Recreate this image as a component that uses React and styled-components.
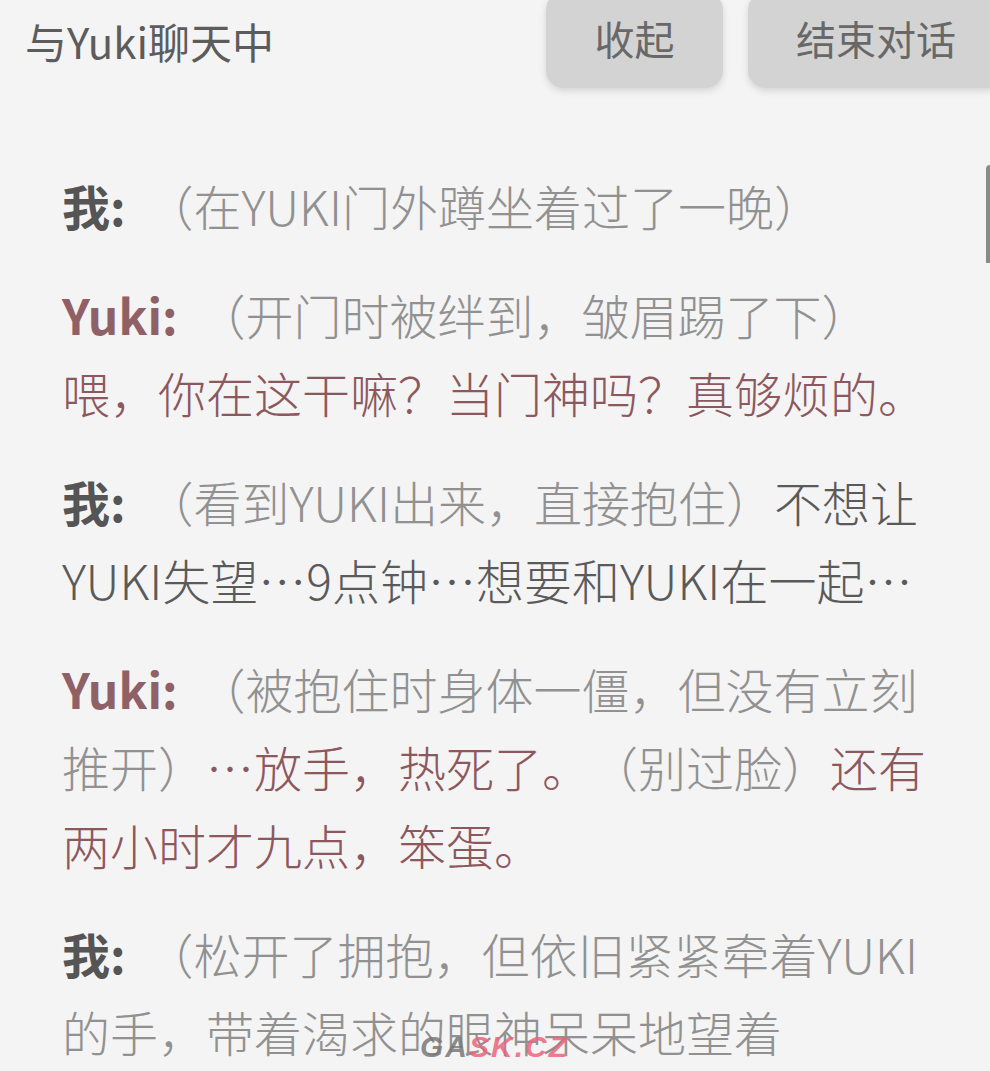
import React from 'react'
import styled, { createGlobalStyle } from 'styled-components'

const GlobalStyle = createGlobalStyle`
  html, body {
    margin: 0;
    padding: 0;
    background: #f4f4f4;
    overflow: hidden;
  }
  body {
    font-family: "Noto Sans CJK SC", "Noto Sans", sans-serif;
  }
`

const messages = [
  {
    who: 'me',
    parts: [{ kind: 'action', text: '（在YUKI门外蹲坐着过了一晚）' }],
  },
  {
    who: 'yuki',
    parts: [
      { kind: 'action', text: '（开门时被绊到，皱眉踢了下）' },
      { kind: 'speech', text: '喂，你在这干嘛？当门神吗？真够烦的。', br: true },
    ],
  },
  {
    who: 'me',
    parts: [
      { kind: 'action', text: '（看到YUKI出来，直接抱住）' },
      { kind: 'speech', text: '不想让YUKI失望…9点钟…想要和YUKI在一起…' },
    ],
  },
  {
    who: 'yuki',
    parts: [
      { kind: 'action', text: '（被抱住时身体一僵，但没有立刻推开）' },
      { kind: 'speech', text: '…放手，热死了。' },
      { kind: 'action', text: '（别过脸）' },
      { kind: 'speech', text: '还有两小时才九点，笨蛋。' },
    ],
  },
  {
    who: 'me',
    parts: [
      { kind: 'action', text: '（松开了拥抱，但依旧紧紧牵着YUKI的手，带着渴求的眼神呆呆地望着' },
    ],
  },
]

const names = { me: '我:', yuki: 'Yuki:' }

const App = () => (
  <Page lang="zh-CN">
    <GlobalStyle />
    <Header>
      <Title>与Yuki聊天中</Title>
      <Actions>
        <Button $width={177}>收起</Button>
        <Button $width={256}>结束对话</Button>
      </Actions>
    </Header>

    <Dialog>
      {messages.map((msg, i) => (
        <Line key={i}>
          <Name $who={msg.who}>{names[msg.who]}</Name>
          {msg.parts.map((part, j) => (
            <React.Fragment key={j}>
              {part.br && <br />}
              {part.kind === 'action' ? (
                <Action>{part.text}</Action>
              ) : (
                <Speech $who={msg.who}>{part.text}</Speech>
              )}
            </React.Fragment>
          ))}
        </Line>
      ))}
    </Dialog>

    <ScrollThumb />
    <Watermark>
      GA<em>SK.CZ</em>
    </Watermark>
  </Page>
)

const Page = styled.div`
  position: relative;
  width: 990px;
  height: 1071px;
  overflow: hidden;
  background: #f4f4f4;
`

const Header = styled.div`
  display: flex;
  align-items: center;
  justify-content: space-between;
  height: 96px;
  margin-top: -8px;
  padding-left: 25px;
`

const Title = styled.div`
  font-size: 42px;
  line-height: 1;
  color: #5c5c5c;
  margin-top: 2px;
`

const Actions = styled.div`
  display: flex;
  gap: 25px;
  margin-right: -14px;
  flex-shrink: 0;
`

const Button = styled.button`
  flex-shrink: 0;
  width: ${({ $width }) => $width}px;
  height: 96px;
  border: none;
  border-radius: 18px;
  background: #d3d3d3;
  box-shadow: 0 3px 7px rgba(0, 0, 0, 0.13);
  font-family: inherit;
  font-size: 40px;
  color: #686868;
  padding: 0 0 4px;
`

const Dialog = styled.div`
  padding: 78px 35px 0 62px;
`

const Line = styled.p`
  margin: 0 0 31px;
  font-size: 48px;
  line-height: 78px;
  font-weight: 300;
  text-spacing-trim: space-all;
`

const Name = styled.span`
  font-weight: 700;
  margin-right: 20px;
  color: ${({ $who }) => ($who === 'yuki' ? '#8f6166' : '#555')};
`

const Action = styled.span`
  color: #919191;
`

const Speech = styled.span`
  color: ${({ $who }) => ($who === 'yuki' ? '#8c585d' : '#5a5a5a')};
`

const ScrollThumb = styled.div`
  position: absolute;
  top: 165px;
  right: 0;
  width: 4px;
  height: 98px;
  background: #8a8a8a;
  border-radius: 4px 0 0 0;
`

const Watermark = styled.div`
  position: absolute;
  left: 420px;
  top: 1030px;
  font-family: "Liberation Sans", sans-serif;
  font-size: 30px;
  font-weight: 700;
  font-style: italic;
  letter-spacing: 2px;
  color: rgba(120, 120, 120, 0.85);

  em {
    color: rgba(236, 100, 125, 0.85);
  }
`

export default App
